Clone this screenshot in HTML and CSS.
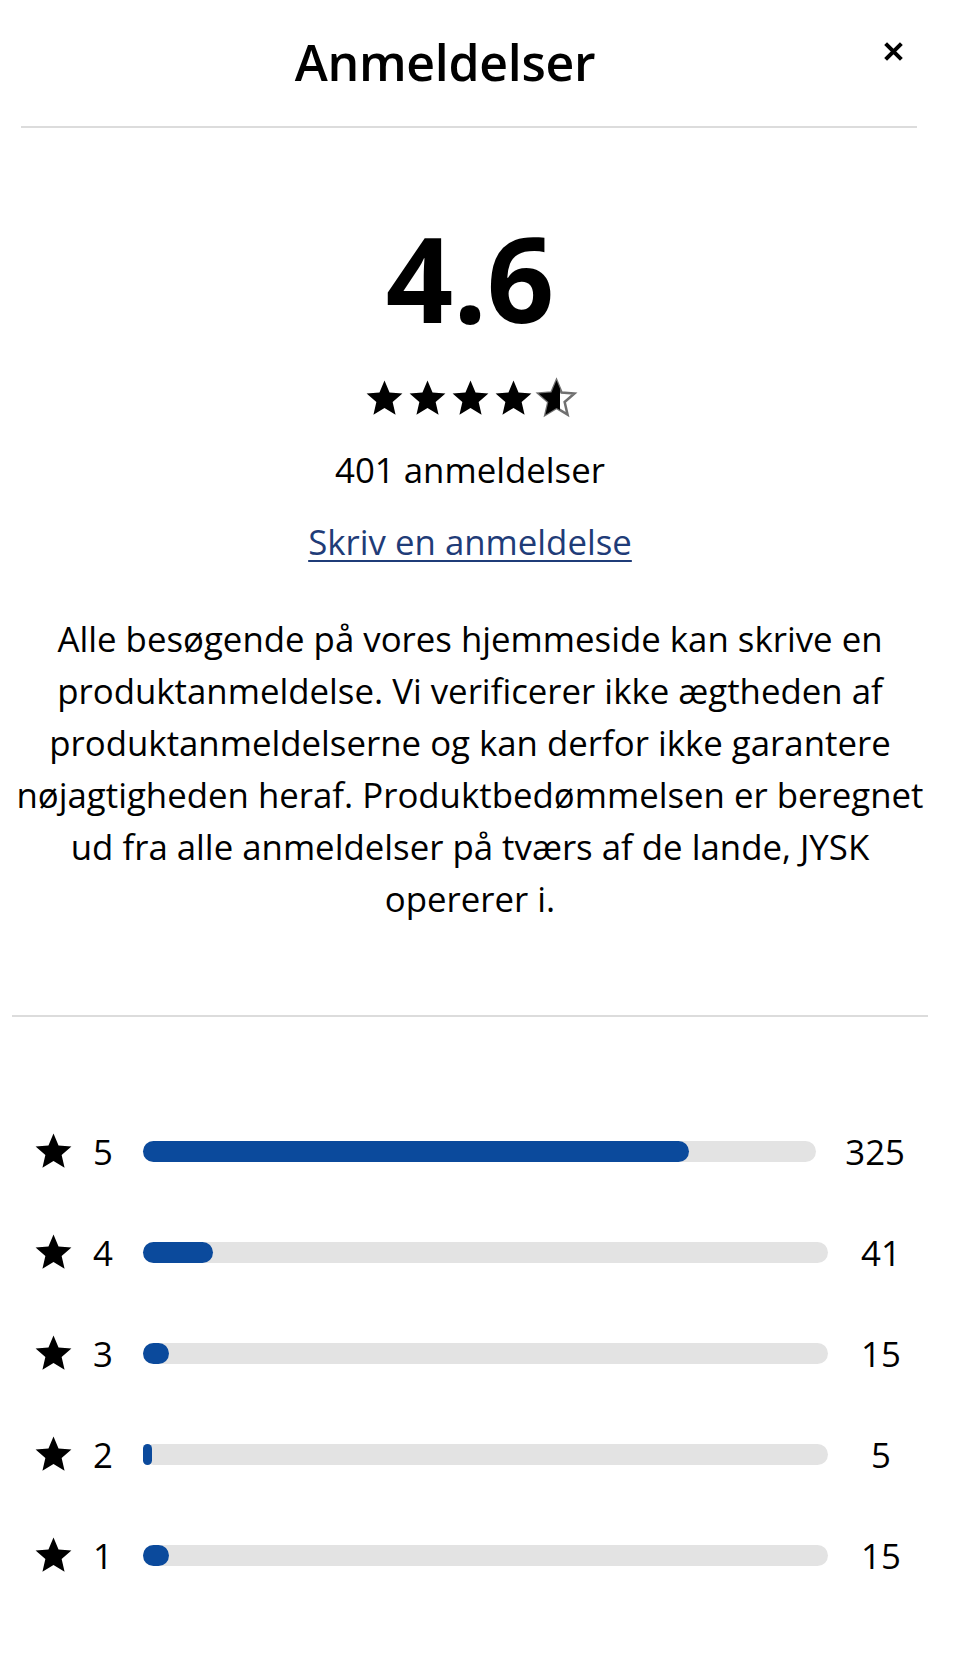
FILE: index.html
```html
<!DOCTYPE html>
<html lang="da">
<head>
<meta charset="utf-8">
<title>Anmeldelser</title>
<link rel="stylesheet" href="styles.css">
</head>
<body>
<svg width="0" height="0" class="defs" aria-hidden="true">
  <defs>
    <path id="star" d="M12 17.27L18.18 21l-1.64-7.03L22 9.24l-7.19-.61L12 2 9.19 8.63 2 9.24l5.46 4.73L5.82 21z"/>
    <clipPath id="half"><rect x="0" y="0" width="14" height="24"/></clipPath>
  </defs>
</svg>
<div class="page">
  <header class="header">
    <h1 class="title">Anmeldelser</h1>
    <button class="close" aria-label="Luk">
      <svg viewBox="0 0 20 20" width="20" height="20"><path d="M2.5 2.5L17.5 17.5M17.5 2.5L2.5 17.5" stroke="#000" stroke-width="3.8" fill="none"/></svg>
    </button>
  </header>

  <section class="summary">
    <div class="score">4.6</div>
    <div class="stars">
      <svg viewBox="0 0 24 24"><use href="#star"/></svg>
      <svg viewBox="0 0 24 24"><use href="#star"/></svg>
      <svg viewBox="0 0 24 24"><use href="#star"/></svg>
      <svg viewBox="0 0 24 24"><use href="#star"/></svg>
      <svg viewBox="0 0 24 24"><use href="#star" class="star-outline"/><use href="#star" clip-path="url(#half)"/></svg>
    </div>
    <div class="count">401 anmeldelser</div>
    <a class="write" href="#">Skriv en anmeldelse</a>
    <p class="disclaimer">Alle besøgende på vores hjemmeside kan skrive en produktanmeldelse. Vi verificerer ikke ægtheden af produktanmeldelserne og kan derfor ikke garantere nøjagtigheden heraf. Produktbedømmelsen er beregnet ud fra alle anmeldelser på tværs af de lande, JYSK opererer i.</p>
  </section>

  <hr class="divider">

  <section class="breakdown">
    <div class="row">
      <svg class="row-star" viewBox="0 0 24 24"><use href="#star"/></svg>
      <span class="rating">5</span>
      <div class="track"><div class="fill" style="width:81.05%"></div></div>
      <span class="num">325</span>
    </div>
    <div class="row">
      <svg class="row-star" viewBox="0 0 24 24"><use href="#star"/></svg>
      <span class="rating">4</span>
      <div class="track"><div class="fill" style="width:10.22%"></div></div>
      <span class="num">41</span>
    </div>
    <div class="row">
      <svg class="row-star" viewBox="0 0 24 24"><use href="#star"/></svg>
      <span class="rating">3</span>
      <div class="track"><div class="fill" style="width:3.74%"></div></div>
      <span class="num">15</span>
    </div>
    <div class="row">
      <svg class="row-star" viewBox="0 0 24 24"><use href="#star"/></svg>
      <span class="rating">2</span>
      <div class="track"><div class="fill thin" style="width:1.25%"></div></div>
      <span class="num">5</span>
    </div>
    <div class="row">
      <svg class="row-star" viewBox="0 0 24 24"><use href="#star"/></svg>
      <span class="rating">1</span>
      <div class="track"><div class="fill" style="width:3.74%"></div></div>
      <span class="num">15</span>
    </div>
  </section>
</div>
</body>
</html>
```
FILE: styles.css
```css
* { box-sizing: border-box; }

html, body {
  margin: 0;
  padding: 0;
  background: #ffffff;
  color: #000;
  font-family: "Open Sans", "Noto Sans", "Liberation Sans", sans-serif;
}

.defs { position: absolute; width: 0; height: 0; overflow: hidden; }

.page {
  width: 940px;
  height: 1658px;
  overflow: hidden;
}

.header {
  display: flex;
  align-items: center;
  margin: 0 23px 0 21px;
  padding: 32px 0 34px;
  border-bottom: 2px solid #dcdcdc;
}

.title {
  flex: 1;
  margin: 0;
  text-align: center;
  font-size: 50px;
  line-height: 60px;
  font-weight: 600;
  letter-spacing: -0.3px;
}

.close {
  width: 48px;
  height: 48px;
  margin-top: -22px;
  padding: 0;
  border: 0;
  background: none;
  display: flex;
  align-items: center;
  justify-content: center;
}
.close svg { width: 21px; height: 21px; }

.summary {
  margin: 0 12px;
  display: flex;
  flex-direction: column;
  align-items: center;
  text-align: center;
  padding-top: 91px;
}

.score {
  font-size: 118px;
  line-height: 118px;
  font-weight: 700;
  letter-spacing: 0;
}

.stars {
  display: flex;
  margin-top: 40px;
  height: 43px;
}
.stars svg {
  width: 43px;
  height: 43px;
  fill: #000;
}
.star-outline {
  fill: none;
  stroke: #707070;
  stroke-width: 1.4;
}

.count {
  margin-top: 27px;
  font-size: 34.8px;
  line-height: 46px;
}

.write {
  margin-top: 26px;
  font-size: 34.8px;
  line-height: 46px;
  color: #1f3c78;
  text-decoration: underline;
  text-decoration-thickness: 2px;
  text-underline-offset: 5px;
}

.disclaimer {
  margin: 48px 0 0;
  font-size: 34.8px;
  line-height: 52px;
}

.divider {
  margin: 90px 12px 0;
  border: 0;
  border-top: 2px solid #dcdcdc;
  height: 0;
}

.breakdown {
  margin: 0 12px;
  padding: 84px 23px 0 20px;
}

.row {
  display: flex;
  align-items: center;
  height: 101px;
}

.row-star {
  width: 43px;
  height: 43px;
  fill: #000;
  flex: none;
}

.rating {
  width: 24px;
  margin-left: 16px;
  text-align: center;
  font-size: 34.8px;
  line-height: 46px;
}

.track {
  flex: 1;
  margin: 0 29px 0 28px;
  height: 21px;
  border-radius: 11px;
  background: #e3e3e3;
}

.fill {
  height: 100%;
  min-width: 9px;
  border-radius: 11px;
  background: #0b4a9c;
}
.fill.thin { border-radius: 5px; }

.num {
  min-width: 48px;
  text-align: center;
  font-size: 34.8px;
  line-height: 46px;
}
```
